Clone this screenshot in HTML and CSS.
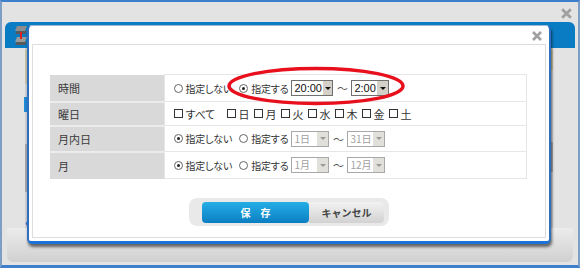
FILE: index.html
```html
<!DOCTYPE html>
<html lang="ja">
<head>
    <meta charset="UTF-8">
    <meta name="viewport" content="width=device-width, initial-scale=1.0">
    <title>条件設定</title>
    <link rel="stylesheet" href="styles.css">
</head>
<body>
    <div class="window">
        <div class="window-bar">
            <svg class="close-icon" viewBox="0 0 12 12"><path d="M2 2L10 10M10 2L2 10"/></svg>
        </div>
        <div class="window-body">
            <div class="page-head">
                <svg class="page-icon" viewBox="0 0 14 24">
                    <path d="M3 2h10l-2 5H1z" fill="#8c8c8c"/>
                    <path d="M3 7h10l-2 3H1z" fill="#5a5a5a"/>
                    <path d="M3 13h10l-2 5H1z" fill="#9a9a9a"/>
                    <path d="M3 18h10l-2 3H1z" fill="#5a5a5a"/>
                    <rect x="6" y="8" width="2" height="7" fill="#e02020"/>
                </svg>
            </div>
            <div class="page-main">
                <div class="page-side side-left">
                    <span class="side-tan"></span>
                    <span class="side-blue"></span>
                    <span class="side-gray"></span>
                    <span class="side-arrow">&lsaquo;</span>
                </div>
                <div class="page-side side-right">
                    <span class="side-tan"></span>
                    <span class="side-gray"></span>
                </div>
            </div>
            <div class="page-foot"></div>
        </div>

        <div class="dialog">
            <svg class="dialog-close" viewBox="0 0 12 12"><path d="M2 2L10 10M10 2L2 10"/></svg>
            <div class="panel">
                <table class="cond">
                    <tr class="row-time">
                        <th>時間</th>
                        <td>
                            <div class="line">
                                <span class="opt"><i class="radio"></i>指定しない</span>
                                <span class="opt"><i class="radio on"></i>指定する</span>
                                <span class="sel w42"><span class="sel-text">20:00</span><span class="sel-btn"></span></span>
                                <span class="tilde">～</span>
                                <span class="sel"><span class="sel-text">2:00</span><span class="sel-btn"></span></span>
                            </div>
                        </td>
                    </tr>
                    <tr class="row-week">
                        <th>曜日</th>
                        <td>
                            <div class="line">
                                <span class="chk all"><i class="box"></i>すべて</span>
                                <span class="chk"><i class="box"></i>日</span>
                                <span class="chk"><i class="box"></i>月</span>
                                <span class="chk"><i class="box"></i>火</span>
                                <span class="chk"><i class="box"></i>水</span>
                                <span class="chk"><i class="box"></i>木</span>
                                <span class="chk"><i class="box"></i>金</span>
                                <span class="chk"><i class="box"></i>土</span>
                            </div>
                        </td>
                    </tr>
                    <tr class="row-day">
                        <th>月内日</th>
                        <td>
                            <div class="line">
                                <span class="opt"><i class="radio on"></i>指定しない</span>
                                <span class="opt"><i class="radio"></i>指定する</span>
                                <span class="sel off"><span class="sel-text">1日</span><span class="sel-btn"></span></span>
                                <span class="tilde">～</span>
                                <span class="sel off"><span class="sel-text">31日</span><span class="sel-btn"></span></span>
                            </div>
                        </td>
                    </tr>
                    <tr class="row-month">
                        <th>月</th>
                        <td>
                            <div class="line">
                                <span class="opt"><i class="radio on"></i>指定しない</span>
                                <span class="opt"><i class="radio"></i>指定する</span>
                                <span class="sel off"><span class="sel-text">1月</span><span class="sel-btn"></span></span>
                                <span class="tilde">～</span>
                                <span class="sel off"><span class="sel-text">12月</span><span class="sel-btn"></span></span>
                            </div>
                        </td>
                    </tr>
                </table>
                <div class="actions">
                    <div class="btn-group">
                        <button class="btn-save">保　存</button>
                        <button class="btn-cancel">キャンセル</button>
                    </div>
                </div>
            </div>
            <svg class="mark" viewBox="0 0 180 44"><ellipse cx="90" cy="22" rx="87" ry="17.5"/></svg>
        </div>
    </div>
</body>
</html>
```

FILE: styles.css
```css
* {
    box-sizing: border-box;
}
body {
    margin: 0;
    font-family: "Noto Sans CJK JP", "Liberation Sans", sans-serif;
    font-size: 11px;
    color: #333;
}
.window {
    position: relative;
    width: 580px;
    height: 268px;
    border: 2px solid #3d7fcb;
    border-bottom-width: 3px;
    border-left-color: #7d9ec4;
    border-right-color: #7d9ec4;
    background: #e3e3e3;
}
.window-bar {
    height: 20px;
    display: flex;
    justify-content: flex-end;
    align-items: center;
    padding: 3px 5px 0 0;
}
.close-icon, .dialog-close {
    width: 13px;
    height: 13px;
    fill: none;
    stroke: #a0a0a0;
    stroke-width: 2.6;
}
.window-body {
    padding: 0 3px;
}
.page-head {
    height: 26px;
    background: #0a7cc3;
    border-radius: 6px 6px 0 0;
    padding: 2px 0 0 9px;
}
.page-icon {
    width: 14px;
    height: 24px;
}
.page-main {
    height: 180px;
    display: flex;
    justify-content: space-between;
}
.page-side {
    position: relative;
    width: 22px;
    border-right: 2px solid #d2d2d2;
}
.side-right {
    width: 24px;
    border-right: none;
    border-left: 2px solid #d2d2d2;
}
.side-tan {
    position: absolute;
    top: 2px;
    right: -2px;
    width: 2px;
    height: 34px;
    background: #c9c2a6;
}
.side-right .side-tan {
    left: -2px;
    right: auto;
    height: 20px;
}
.side-blue {
    position: absolute;
    top: 49px;
    right: -2px;
    width: 3px;
    height: 15px;
    background: #1f8ad6;
}
.side-gray {
    position: absolute;
    top: 96px;
    right: -2px;
    width: 2px;
    height: 48px;
    background: #a8a8a8;
}
.side-right .side-gray {
    left: -2px;
    right: auto;
    top: 94px;
    height: 30px;
}
.side-arrow {
    position: absolute;
    top: 170px;
    right: -4px;
    color: #1f7ad0;
    font: bold 12px "Liberation Sans", sans-serif;
    line-height: 10px;
}
.page-foot {
    height: 34px;
    margin: 0 2px;
    border-radius: 0 0 6px 6px;
    background: linear-gradient(#ececec, #d0d0d0);
}

/* dialog */
.dialog {
    position: absolute;
    left: 25px;
    top: 23px;
    width: 524px;
    height: 219px;
    background: #fff;
    border: 1px solid #9fb7d4;
    border-left: 2px solid #2e6fc0;
    border-right: 2px solid #2e6fc0;
    border-bottom: 3px solid #1b73da;
    border-radius: 5px;
    box-shadow: 1px 3px 3px rgba(0, 0, 0, 0.55);
}
.dialog-close {
    position: absolute;
    left: 502px;
    top: 4px;
    width: 12px;
    height: 12px;
}
.panel {
    margin: 18px 3px 0;
    height: 194px;
    border: 1px solid #dedede;
    padding: 29px 0 0 17px;
}
.cond {
    width: 477px;
    border-collapse: collapse;
}
.cond th {
    width: 114px;
    background: #d9d9d9;
    font-weight: normal;
    text-align: left;
    padding: 0 0 0 8px;
    border-bottom: 2px solid #ececec;
    color: #3a3a3a;
}
.cond td {
    border: 1px solid #e6e6e6;
    padding: 0 0 0 9px;
}
.row-time th, .row-time td { height: 27px; }
.row-week th, .row-week td { height: 24px; }
.row-day th, .row-day td { height: 26px; }
.row-month th, .row-month td { height: 27px; border-bottom: none; }
.row-month td { border-bottom: 1px solid #e6e6e6; }

.line {
    display: flex;
    align-items: center;
    font-size: 10px;
    letter-spacing: -0.2px;
    font-feature-settings: "palt";
    white-space: nowrap;
}
.opt {
    display: flex;
    align-items: center;
    gap: 3px;
    margin-right: 7px;
}
.opt + .opt {
    margin-right: 3px;
}
.radio {
    width: 9px;
    height: 9px;
    border: 1px solid #666;
    border-radius: 50%;
    display: flex;
    align-items: center;
    justify-content: center;
}
.radio.on::after {
    content: "";
    width: 3px;
    height: 3px;
    background: #222;
    border-radius: 50%;
}
.chk {
    display: flex;
    align-items: center;
    gap: 3px;
    width: 27px;
    font-size: 11px;
}
.chk.all {
    width: 53px;
}
.box {
    width: 9px;
    height: 9px;
    border: 1px solid #333;
    background: #fff;
}
.sel {
    display: flex;
    width: 38px;
    height: 16px;
    border: 1px solid #6f6f6f;
    font: 11px "Liberation Sans", sans-serif;
    letter-spacing: 0;
    line-height: 14px;
}
.sel.w42 {
    width: 42px;
}
.sel-text {
    flex: 1;
    padding-left: 2px;
    color: #111;
}
.sel.off .sel-text {
    font-family: "Noto Sans CJK JP", sans-serif;
    font-size: 10px;
}
.sel-btn {
    width: 12px;
    background: #d4d0c8;
    border-left: 1px solid #fff;
    display: flex;
    align-items: center;
    justify-content: center;
}
.sel-btn::after {
    content: "";
    border: 3px solid transparent;
    border-top: 3px solid #111;
    border-bottom: none;
}
.sel.off {
    border-color: #a8a8a8;
}
.sel.off .sel-text {
    color: #a0a0a0;
}
.sel.off .sel-btn {
    background: #e2e0da;
}
.sel.off .sel-btn::after {
    border-top-color: #999;
}
.tilde {
    width: 18px;
    text-align: center;
    color: #555;
    font-size: 11px;
}
.actions {
    margin: 19px 0 0 -17px;
    display: flex;
    justify-content: center;
}
.btn-group {
    display: flex;
    width: 200px;
    height: 28px;
    padding: 4px 5px 3px 13px;
    background: #e9e9e9;
    border-radius: 8px;
}
.btn-group button {
    border: none;
    height: 21px;
    font-family: "Noto Sans CJK JP", sans-serif;
    font-size: 10px;
    font-weight: bold;
    padding: 0;
    cursor: pointer;
}
.btn-save {
    width: 107px;
    color: #fff;
    border-radius: 4px;
    background: linear-gradient(#25aee6, #0b7ec2);
}
.btn-cancel {
    width: 75px;
    color: #444;
    border-radius: 0 4px 4px 0;
    background: linear-gradient(#f2f2f2, #d2d2d2);
}
.mark {
    position: absolute;
    left: 197px;
    top: 38px;
    width: 180px;
    height: 44px;
    fill: none;
    stroke: #e8101c;
    stroke-width: 3.5;
}
```
